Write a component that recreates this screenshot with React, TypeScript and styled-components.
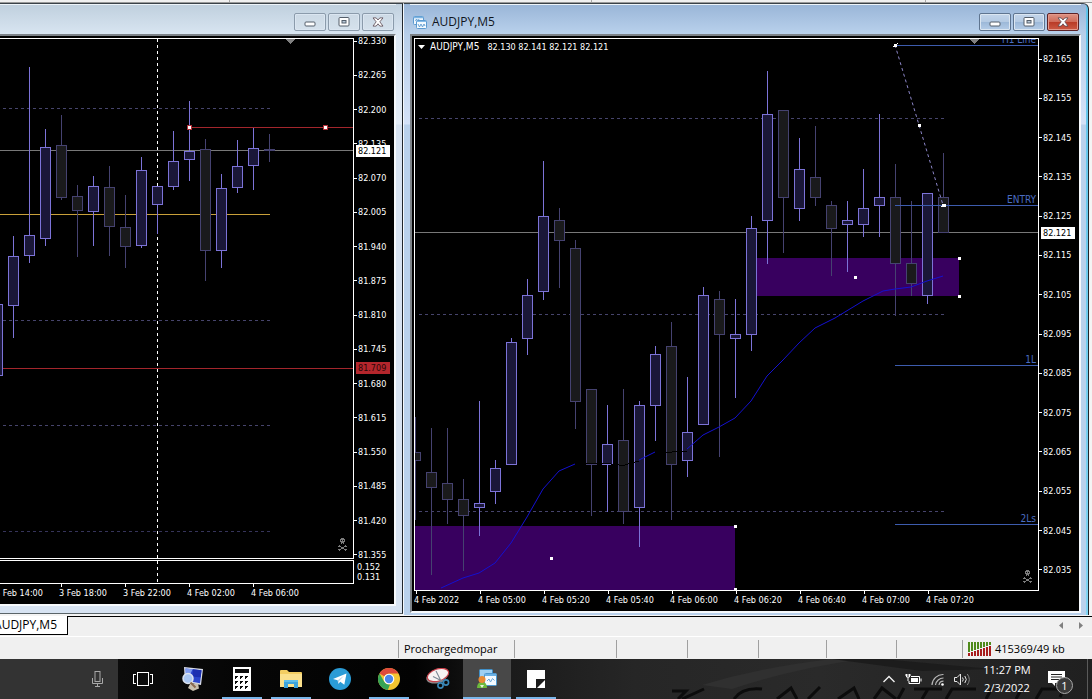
import React from "react";
import styled, { createGlobalStyle, css } from "styled-components";

const UI_FONT = '"Open Sans", "Noto Sans", sans-serif';
const CHART_FONT = '"DejaVu Sans Condensed", "DejaVu Sans", sans-serif';

const GlobalStyle = createGlobalStyle`
  *, *::before, *::after { box-sizing: border-box; }
  html, body { margin: 0; background: #f0f0f0; }
  button { font: inherit; color: inherit; border: 0; padding: 0; background: none; }
  svg { display: block; }
`;

/* ---------- page ---------- */

const Page = styled.div`
  display: flex;
  flex-direction: column;
  min-height: 100vh;
  overflow: hidden;
  font-family: ${UI_FONT};
  font-size: 12px;
  line-height: 16px;
  color: #000;
`;

const ToolbarEdge = styled.div`
  display: grid;
  grid-template-columns: 230fr 362fr 334fr 166fr;
  height: 3px;
  background: #f0f0f0;
  border-bottom: 1px solid #9a9a9a;
`;

const ToolbarCell = styled.div`
  border-right: 1px solid #a8a8a8;
  &:last-child { border-right: 0; }
`;

const Workspace = styled.main`
  flex: 1;
  display: grid;
  grid-template-columns: 403fr 689fr;
  background: #f4f4f4;
`;

/* ---------- chart windows ---------- */

const ChartWindow = styled.section<{ $active?: boolean }>`
  display: flex;
  flex-direction: column;
  min-width: 0;
  border-top: 1px solid #3a4248;
  border-right: 1px solid #20262c;
  ${(p) =>
    p.$active
      ? css`
          margin: 0 3px 1px 0;
          padding: 0 7px 2px 6px;
          border-left: 1px solid #f4f8fc;
          border-top-right-radius: 6px;
          background:
            linear-gradient(#5fc4ea, #7fd4f2) right / 2px 100% no-repeat,
            linear-gradient(#9ab6d8 0, #b8cfea 31px, #d4e2f8 120px, #b9d1ec 121px, #b9d1ec 100%);
        `
      : css`
          margin: 0 0 2px;
          padding: 0 6px 7px 0;
          border-bottom: 1px solid #5a6468;
          background: linear-gradient(#c0d0de 0, #dbe7f3 31px, #e4edf8 120px, #d7e3f2 121px);
        `}
`;

const TitleBar = styled.header<{ $active?: boolean }>`
  display: flex;
  align-items: center;
  gap: 2px;
  height: 30px;
  padding: 5px 2px 0 3px;
  border-top: 1px solid #eef4f9;
  background: ${(p) =>
    p.$active ? "linear-gradient(#9ab6d8, #b9d1ec)" : "linear-gradient(#c0d0de, #d8e5f1)"};
`;

const WindowTitle = styled.h1`
  flex: 1;
  display: flex;
  align-items: center;
  gap: 5px;
  margin: 0;
  font-size: 12px;
  line-height: 16px;
  font-weight: 400;
  color: #10151c;
`;

const WindowButton = styled.button<{ $tone?: "blue" | "red" }>`
  display: grid;
  place-items: center;
  width: 32px;
  height: 18px;
  border: 1px solid ${(p) => (p.$tone === "red" ? "#5c2226" : p.$tone ? "#5f7590" : "#8b9bab")};
  border-radius: 2px;
  box-shadow: inset 0 0 0 1px ${(p) => (p.$tone === "red" ? "#e39a8c" : "#dbe6f1")};
  background: ${(p) =>
    p.$tone === "red"
      ? "linear-gradient(#dd9384 0, #cf6a58 50%, #b93a26 51%, #cc5a44 100%)"
      : p.$tone
        ? "linear-gradient(#c3d5ea 0, #b4cae3 50%, #9cb8d8 51%, #b5cde8 100%)"
        : "linear-gradient(#ccd9e5, #d5e1ec)"};
`;

const ChartFrame = styled.div<{ $active?: boolean }>`
  flex: 1;
  display: flex;
  min-width: 0;
  background: #000;
  border-top: 2px solid #7c8288;
  border-left: ${(p) => (p.$active ? "2px solid #7c8288" : "0")};
  border-right: 2px solid #f6f9fc;
  border-bottom: 2px solid #f6f9fc;
  padding: ${(p) => (p.$active ? "0 0 0 2px" : "0")};
  font-family: ${CHART_FONT};
  font-size: 9px;
  line-height: 10px;
  color: #fff;
`;

const PlotColumn = styled.div`
  flex: 1;
  display: flex;
  flex-direction: column;
  min-width: 0;
  padding-top: 2px;
`;

const Plot = styled.div<{ $left?: boolean; $sub?: boolean }>`
  position: relative;
  display: flex;
  flex: ${(p) => (p.$sub ? "0 0 24px" : "1")};
  min-height: ${(p) => (p.$sub ? "24px" : "480px")};
  margin-top: ${(p) => (p.$sub ? "1px" : "0")};
  border: 1px solid #fff;
  border-left-width: ${(p) => (p.$left ? "1px" : "0")};
  overflow: hidden;
`;

const PlotSvg = styled.svg`
  flex: 1;
  min-width: 0;
  shape-rendering: crispEdges;
  text { font-size: 10px; fill: #4a6cc0; }
`;

const Quote = styled.p`
  position: absolute;
  top: 2px;
  left: 3px;
  display: flex;
  align-items: center;
  gap: 5px;
  margin: 0;
  line-height: 12px;
  white-space: nowrap;
`;

const QuoteSymbol = styled.span`
  font-size: 10px;
  padding-right: 3px;
`;

const TimeAxis = styled.div<{ $end?: boolean }>`
  display: flex;
  height: 20px;
  overflow: hidden;
  justify-content: ${(p) => (p.$end ? "flex-end" : "flex-start")};
  padding-right: ${(p) => (p.$end ? "39px" : "0")};
`;

const TimeLabel = styled.span`
  flex: 0 0 64px;
  white-space: nowrap;
  &::before {
    content: "";
    display: block;
    width: 1px;
    height: 3px;
    margin: 0 0 1px 2px;
    background: #fff;
  }
`;

const AxisColumn = styled.div<{ $padded?: boolean }>`
  position: relative;
  display: flex;
  flex-direction: column;
  flex: 0 0 40px;
  padding: ${(p) => (p.$padded ? "18px 0 36px" : "0")};
`;

const PriceScale = styled.div`
  flex: 1;
  display: flex;
  flex-direction: column;
  justify-content: space-between;
`;

const PriceLabel = styled.span`
  display: flex;
  align-items: center;
  gap: 1px;
  &::before {
    content: "";
    width: 3px;
    height: 1px;
    background: #fff;
  }
`;

const SubScale = styled.div`
  display: flex;
  flex-direction: column;
  height: 44px;
  padding: 2px 0 0 3px;
`;

const PriceTag = styled.span<{ $top: number; $red?: boolean }>`
  position: absolute;
  left: 2px;
  top: ${(p) => p.$top}px;
  width: 34px;
  height: 12px;
  padding-left: 2px;
  line-height: 12px;
  color: ${(p) => (p.$red ? "#2a0608" : "#000")};
  background: ${(p) => (p.$red ? "#b4262c" : "#fff")};
`;

/* ---------- tabs and status ---------- */

const TabStrip = styled.nav`
  display: flex;
  height: 21px;
  background: #f0f0f0;
  border-bottom: 1px solid #fff;
`;

const Tab = styled.button`
  display: flex;
  justify-content: flex-end;
  align-items: center;
  flex: 0 0 68px;
  height: 19px;
  padding-right: 10px;
  overflow: hidden;
  background: #fff;
  border-right: 1px solid #000;
  border-bottom: 1px solid #000;
`;

const TabRest = styled.div`
  flex: 1;
  display: flex;
  justify-content: flex-end;
  gap: 8px;
  padding-right: 5px;
  border-top: 1px solid #000;
`;

const ScrollButton = styled.button`
  display: grid;
  place-items: center;
  width: 12px;
  height: 17px;
`;

const StatusBar = styled.footer`
  display: grid;
  grid-template-columns: 398fr 116fr 102fr 71fr 71fr 68fr 70fr 66fr 130fr;
  height: 22px;
  padding: 3px 0 1px;
  font-size: 11px;
  background: #f0f0f0;
`;

const StatusCell = styled.div`
  display: flex;
  align-items: center;
  gap: 3px;
  padding-left: 5px;
  white-space: nowrap;
  border-left: 1px solid #a0a0a0;
  &:first-child { border-left: 0; }
`;

/* ---------- taskbar ---------- */

const Taskbar = styled.div`
  position: relative;
  display: flex;
  height: 40px;
  overflow: hidden;
  color: #fff;
  background: linear-gradient(90deg, #121212 0, #060606 22%, #020202 38%, #1a1a1a 46%, #262626 58%, #2a2a2a 75%, #202020 100%);
`;

const Wallpaper = styled.svg`
  position: absolute;
  top: 0;
  right: 0;
  width: 450px;
  height: 40px;
`;

const SearchArea = styled.div`
  display: flex;
  align-items: center;
  justify-content: flex-end;
  flex: 0 0 118px;
  padding-right: 14px;
  background: #333;
`;

const Apps = styled.div`
  display: flex;
  gap: 1px;
  flex: 1;
`;

const AppButton = styled.button<{ $wide?: boolean; $running?: boolean; $active?: boolean }>`
  position: relative;
  display: grid;
  place-items: center;
  flex: 0 0 ${(p) => (p.$wide ? 50 : 48)}px;
  height: 40px;
  background: ${(p) => (p.$active ? "#484848" : "transparent")};
  &::after {
    content: "";
    position: absolute;
    bottom: 0;
    left: ${(p) => (p.$active ? 0 : 4)}px;
    right: ${(p) => (p.$active ? 0 : 4)}px;
    height: 2px;
    background: ${(p) => (p.$running || p.$active ? "#7ab6ea" : "transparent")};
  }
`;

const Tray = styled.div`
  position: relative;
  display: flex;
  align-items: center;
  gap: 9px;
`;

const TrayButton = styled.button`
  display: grid;
  place-items: center;
`;

const Clock = styled.button`
  width: 54px;
  font-size: 11px;
  line-height: 18px;
  text-align: center;
  white-space: nowrap;
`;

const ActionCenter = styled.button`
  position: relative;
  display: flex;
  align-items: flex-start;
  width: 33px;
  height: 40px;
  padding: 12px 0 0 5px;
  margin-right: 2px;
`;

const Badge = styled.span`
  position: absolute;
  left: 13px;
  top: 18px;
  width: 17px;
  height: 17px;
  border: 1px solid #aaa;
  border-radius: 50%;
  background: #3a3a3a;
  font-size: 11px;
  line-height: 15px;
  text-align: center;
`;

const ShowDesktop = styled.button`
  width: 5px;
  height: 40px;
  border-left: 1px solid #5a5a5a;
`;

/* ---------- chart data: centre, high, body top, body bottom, low, rising ---------- */

type Candle = [number, number, number, number, number, boolean];

const hourly: Candle[] = [
  [-3, 304, 304, 375, 375, true],
  [13, 236, 256, 305, 337, true],
  [29, 67, 235, 255, 262, true],
  [45, 129, 147, 238, 245, true],
  [61, 115, 145, 197, 199, false],
  [77, 185, 196, 210, 256, false],
  [93, 176, 186, 211, 245, true],
  [109, 166, 187, 226, 255, false],
  [125, 195, 227, 246, 267, false],
  [141, 157, 170, 245, 247, true],
  [157, 186, 186, 204, 233, true],
  [173, 131, 161, 186, 189, true],
  [189, 101, 151, 159, 180, true],
  [205, 139, 149, 250, 280, false],
  [221, 174, 188, 250, 267, true],
  [237, 140, 166, 187, 192, true],
  [253, 128, 148, 165, 189, true],
  [269, 134, 149, 150, 161, false],
];

const fiveMinute: Candle[] = [
  [415, 417, 452, 460, 519, false],
  [431, 428, 472, 487, 574, false],
  [447, 428, 483, 499, 523, false],
  [463, 479, 499, 515, 570, false],
  [479, 401, 503, 507, 535, true],
  [495, 460, 468, 491, 503, true],
  [511, 338, 342, 464, 464, true],
  [527, 279, 295, 338, 354, true],
  [543, 161, 216, 291, 299, true],
  [559, 208, 220, 240, 287, false],
  [575, 240, 248, 401, 428, false],
  [591, 389, 389, 464, 515, false],
  [607, 405, 444, 464, 511, true],
  [623, 389, 440, 511, 523, false],
  [639, 401, 405, 507, 546, true],
  [655, 346, 354, 405, 440, true],
  [671, 322, 346, 464, 519, false],
  [687, 377, 432, 460, 476, true],
  [703, 287, 295, 424, 424, true],
  [719, 291, 299, 334, 456, false],
  [735, 299, 334, 338, 397, true],
  [751, 216, 228, 334, 350, true],
  [767, 71, 114, 220, 263, true],
  [783, 110, 110, 197, 252, false],
  [799, 138, 169, 208, 220, true],
  [815, 126, 177, 197, 205, false],
  [831, 201, 205, 228, 275, false],
  [847, 201, 220, 224, 271, true],
  [863, 169, 208, 224, 236, true],
  [879, 114, 197, 205, 236, true],
  [895, 164, 197, 263, 315, false],
  [911, 201, 263, 283, 295, false],
  [927, 193, 193, 295, 303, true],
  [943, 153, 197, 232, 232, false],
];

const hourlyPrices = Array.from({ length: 16 }, (_, i) => (82.33 - i * 0.065).toFixed(3));
const fiveMinutePrices = Array.from({ length: 14 }, (_, i) => (82.165 - i * 0.01).toFixed(3));
const hourlyTimes = ["3 Feb 14:00", "3 Feb 18:00", "3 Feb 22:00", "4 Feb 02:00", "4 Feb 06:00"];
const fiveMinuteTimes = [
  "4 Feb 2022", "4 Feb 05:00", "4 Feb 05:20", "4 Feb 05:40", "4 Feb 06:00",
  "4 Feb 06:20", "4 Feb 06:40", "4 Feb 07:00", "4 Feb 07:20",
];

const Candles = ({ data }: { data: Candle[] }) => (
  <>
    {data.map(([x, high, top, bottom, low, up]) => {
      const edge = up ? "#7c73d8" : "#454270";
      return (
        <g key={x} fill={edge}>
          <rect x={x} y={high} width={1} height={low - high + 1} />
          <rect x={x - 5} y={top} width={11} height={bottom - top + 1} />
          {bottom - top > 1 && (
            <rect x={x - 4} y={top + 1} width={9} height={bottom - top - 1} fill={up ? "#1a1738" : "#1a1a1c"} />
          )}
        </g>
      );
    })}
  </>
);

const HLine = ({ y, color, x = 0, end = "100%", dashed }: { y: number; color: string; x?: number; end?: number | string; dashed?: boolean }) => (
  <line x1={x} x2={end} y1={y + 0.5} y2={y + 0.5} stroke={color} strokeDasharray={dashed ? "3 3" : undefined} />
);

/* Skull and crossbones, one character per pixel. */
const skullRows = [
  "...###...",
  "..#####..",
  "..#.#.#..",
  "..#####..",
  "...###...",
  "...#.#...",
  ".........",
  ".#.....#.",
  "###...###",
  "...###...",
  "...###...",
  "###...###",
  ".#.....#.",
];

const Skull = () => (
  <path
    fill="#7c7c7c"
    d={skullRows
      .flatMap((row, y) => [...row].map((c, x) => (c === "#" ? `M${x} ${y}h1v1h-1z` : "")))
      .join("")}
  />
);

const HourlyPlot = () => (
  <PlotSvg role="img" aria-label="AUDJPY hourly candles">
    <HLine y={69} x={3} end={270} color="#46446c" dashed />
    <HLine y={281} x={3} end={270} color="#46446c" dashed />
    <HLine y={386} x={3} end={270} color="#46446c" dashed />
    <HLine y={492} x={3} end={270} color="#36345a" dashed />
    <HLine y={111} color="#787878" />
    <HLine y={175} end={270} color="#c9a03a" />
    <line x1={157.5} x2={157.5} y1={0} y2="100%" stroke="#fff" strokeDasharray="3 3" />
    <HLine y={329} color="#a3262c" />
    <HLine y={88} x={189} color="#a3262c" />
    <g transform="translate(0 -39)">
      <Candles data={hourly} />
      {[189, 325].map((x) => (
        <g key={x}>
          <rect x={x - 2} y={125} width={5} height={5} fill="#b03038" />
          <rect x={x - 1} y={126} width={3} height={3} fill="#fff" />
        </g>
      ))}
      <path d="M285 39h11l-5.500 5z" fill="#808080" />
      <g transform="translate(338 538)"><Skull /></g>
    </g>
  </PlotSvg>
);

const FiveMinutePlot = () => (
  <PlotSvg role="img" aria-label="AUDJPY five minute candles">
    <HLine y={79} x={4} end={529} color="#46446c" dashed />
    <HLine y={275} x={4} end={529} color="#46446c" dashed />
    <HLine y={472} x={4} end={529} color="#46446c" dashed />
    <HLine y={193} color="#787878" />
    <g transform="translate(-415 -39)">
      <rect x={415} y={526} width={320} height={64} fill="#38005f" />
      <rect x={751} y={258} width={208} height={38} fill="#38005f" />
      <Candles data={fiveMinute} />
      <g fill="none" stroke="#1410d0" shapeRendering="auto">
        <polyline points="441,588 463,578 479,573 495,563 511,543 527,517 543,489 559,471 575,464" />
        <polyline points="639,460 655,452" />
        <polyline points="687,449 703,435 719,427 735,418 751,401 767,376 783,360 799,343 815,328 835,318 863,301 883,291 895,289 911,287 927,281 943,276" />
      </g>
      <g fill="none" stroke="#000">
        <polyline points="584,463.5 607,463.5 623,465.500 639,461" />
        <polyline points="665,452.5 687,451" />
      </g>
      <g fill="none" stroke="#8c86c8" strokeDasharray="3 3" shapeRendering="auto">
        <line x1={895} y1={45} x2={943} y2={205} />
      </g>
      <path d="M969 39h11l-5.500 5z" fill="#808080" />
    </g>
    <HLine y={6} x={480} color="#3d5cae" />
    <HLine y={166} x={480} color="#3d5cae" />
    <HLine y={326} x={480} color="#3d5cae" />
    <HLine y={485} x={480} color="#3d5cae" />
    <text x="100%" y={4} dx={-2} textAnchor="end">H1 Line</text>
    <text x="100%" y={164} dx={-2} textAnchor="end">ENTRY</text>
    <text x="100%" y={324} dx={-2} textAnchor="end">1L</text>
    <text x="100%" y={483} dx={-2} textAnchor="end">2Ls</text>
    <g transform="translate(-415 -39)" fill="#fff">
      {[[895, 45], [919, 125], [943, 205], [551, 558], [735, 526], [735, 589], [855, 277], [959, 258], [959, 296]].map(([x, y]) => (
        <rect key={`${x}-${y}`} x={x - 1} y={y - 1} width={3} height={3} />
      ))}
      <path d="M893 46h1v1h-1zM897 43h1v1h-1zM941 206h1v1h-1zM945 204h1v3h-1z" />
      <g transform="translate(1023 570)"><Skull /></g>
    </g>
  </PlotSvg>
);

const WindowButtons = ({ active }: { active?: boolean }) => {
  const tone = active ? "blue" : undefined;
  return (
    <>
      <WindowButton $tone={tone} aria-label="Minimize">
        <svg width="12" height="14"><rect x="1" y="7" width="10" height="4" rx="1" fill="#fff" stroke="#555f6b" /></svg>
      </WindowButton>
      <WindowButton $tone={tone} aria-label="Restore">
        <svg width="12" height="10"><rect x="1" y=".5" width="10" height="8.500" rx="1" fill="#fff" stroke="#555f6b" /><rect x="4" y="3.500" width="4" height="2.500" fill="#b8c8d8" stroke="#555f6b" /></svg>
      </WindowButton>
      <WindowButton $tone={active ? "red" : undefined} aria-label="Close">
        <svg width="12" height="10" viewBox="0 0 13 11">
          <path d="M1 1h3.500l2 2.300L8.500 1H12L8.500 5.300 12 10H8.500l-2-2.500-2 2.500H1l3.500-4.700z" fill="#fff" stroke="#5c4a52" strokeWidth=".9" />
        </svg>
      </WindowButton>
    </>
  );
};

const ChartIcon = () => (
  <svg width="14" height="13" viewBox="0 0 14 13" fill="none">
    <rect x=".5" y=".5" width="10" height="8" rx="1" fill="#eef7ff" stroke="#5c9ad0" />
    <path d="M1 1.500h9" stroke="#7db4e2" strokeWidth="1.500" />
    <path d="M2.500 5l1-2 1.500 2 1-2" stroke="#5c9ad0" strokeWidth=".9" />
    <rect x="3.500" y="4.500" width="10" height="8" rx="1" fill="#f4faff" stroke="#5c9ad0" />
    <path d="M4 5.500h9" stroke="#85bbe8" strokeWidth="1" />
    <path d="M5 8l1.500 3L8 8l1.500 3L11 8l1 2" stroke="#5c9ad0" strokeWidth=".9" />
  </svg>
);

const SignalBars = () => (
  <svg width="24" height="14" shapeRendering="crispEdges">
    {Array.from({ length: 8 }, (_, i) => {
      const red = 3 + i;
      return (
        <g key={i}>
          <rect x={i * 3} y={0} width={2} height={13 - red} fill="#4f8a1c" />
          <rect x={i * 3} y={14 - red} width={2} height={red} fill="#a81c1c" />
        </g>
      );
    })}
  </svg>
);

const ComputerIcon = () => (
  <svg width="24" height="26" viewBox="0 0 24 26">
    <path d="M3 1l19 2-2 16-16-3z" fill="#d8dce8" />
    <path d="M4.500 2.500l16 1.700-1.500 13-13-2.500z" fill="#2b46cc" />
    <path d="M12 3.300l8.500.9-.8 7-8.200-.5z" fill="#1c2fb0" />
    <path d="M4.500 2.500l7 .8-3 7-4 1z" fill="#7f9cf0" />
    <circle cx="7" cy="12.500" r="5" fill="#a9c6f2" stroke="#dde4f0" strokeWidth="1.500" />
    <path d="M9 18l8-.5 1 5-6 2.500-5-3z" fill="#c8bfae" />
    <path d="M9.500 16.500l5 5" stroke="#8a6a50" strokeWidth="2" />
  </svg>
);

const CalculatorIcon = () => (
  <svg width="18" height="24" shapeRendering="crispEdges">
    <rect width="18" height="24" fill="#fff" />
    <rect x="2" y="2" width="14" height="4" fill="#0b0b0b" />
    {[9, 14, 19].map((y) => [2, 7, 12].map((x) => (
      <path key={`${x}-${y}`} d={`M${x} ${y}h3v1h-1v1h-1v1h-1z`} fill="#0b0b0b" />
    )))}
  </svg>
);

const FolderIcon = () => (
  <svg width="22" height="20" viewBox="0 0 22 20">
    <path d="M0 2q0-1 1-1h6l2 2h12q1 0 1 1v14H0z" fill="#f3cd62" />
    <path d="M0 5h22v13H0z" fill="#fbe08c" />
    <path d="M4 11h14v8h-4v-4H8v4H4z" fill="#3ea3dc" />
    <path d="M4 11h14v2H4z" fill="#5fbdea" />
  </svg>
);

const TelegramIcon = () => (
  <svg width="22" height="22" viewBox="0 0 22 22">
    <circle cx="11" cy="11" r="11" fill="#2a9bd6" />
    <path d="M4 11L17.500 5.500 15.300 16.800l-4-3-2 2-.6-3.600z" fill="#fff" />
    <path d="M8.700 12.200l6.500-4.700-5 5.500-.9 2.800z" fill="#b8d4e8" />
  </svg>
);

const ChromeIcon = () => (
  <svg width="22" height="22" viewBox="0 0 22 22">
    <circle cx="11" cy="11" r="11" fill="#f4c531" />
    <path d="M11 0a11 11 0 0 1 9.500 5.500H11a5.500 5.500 0 0 0-4.800 2.800L1.500 5.500A11 11 0 0 1 11 0z" fill="#de4a3c" />
    <path d="M1.500 5.500l4.700 8.200A5.500 5.500 0 0 0 12 16.400L9.800 22A11 11 0 0 1 1.500 5.500z" fill="#35a355" />
    <circle cx="11" cy="11" r="5.300" fill="#fff" />
    <circle cx="11" cy="11" r="4.200" fill="#4a86ea" />
  </svg>
);

const SnipIcon = () => (
  <svg width="24" height="22" viewBox="0 0 24 22" fill="none">
    <ellipse cx="11" cy="8.500" rx="11" ry="6.500" transform="rotate(-18 11 8.500)" fill="#8f8a8c" />
    <ellipse cx="12" cy="7" rx="11" ry="6" transform="rotate(-18 12 7)" fill="#f7f2f2" stroke="#c8404a" strokeWidth="1.200" />
    <path d="M10 3l5.500 11M7 8.500l10 5" stroke="#7d8894" strokeWidth="1.100" />
    <circle cx="14.500" cy="17.500" r="2.600" stroke="#3a88b8" strokeWidth="1.600" />
    <circle cx="20" cy="14.500" r="2.600" stroke="#3a88b8" strokeWidth="1.600" />
  </svg>
);

const TraderIcon = () => (
  <svg width="22" height="20" viewBox="0 0 22 20" fill="none">
    <rect x="3.500" y=".5" width="13" height="12" rx="1" fill="#9fd0f2" stroke="#3f8fc8" />
    <rect x="8.500" y="4.500" width="12" height="12" rx="1" fill="#f4faff" stroke="#4c98d0" />
    <path d="M9 6h11" stroke="#6bb2e6" strokeWidth="2" />
    <path d="M11 12l2-2 1.500 3 2-3.500 2 2" stroke="#6aa6d8" />
    <path d="M1 19q0-6 5-6t5 6z" fill="#6cba3c" />
    <circle cx="6" cy="10.500" r="3.500" fill="#e88a34" />
    <path d="M4 16l2 3 2-3z" fill="#e8f4dc" />
  </svg>
);

const apps = [
  { name: "Task View", wide: true, icon: <svg width="20" height="14" fill="none" stroke="#fff" shapeRendering="crispEdges"><path d="M4.500.5h11v13h-11zM3 2.500H.500v9H3M17 2.500h2.500v9H17" /></svg> },
  { name: "Remote Desktop", icon: <ComputerIcon /> },
  { name: "Calculator", running: true, icon: <CalculatorIcon /> },
  { name: "File Explorer", running: true, icon: <FolderIcon /> },
  { name: "Telegram", icon: <TelegramIcon /> },
  { name: "Chrome", running: true, icon: <ChromeIcon /> },
  { name: "Snipping Tool", icon: <SnipIcon /> },
  { name: "MetaTrader", active: true, icon: <TraderIcon /> },
  { name: "Sticky Notes", running: true, icon: <svg width="18" height="18"><path d="M0 0h18v18H0z" fill="#fff" /><path d="M9 9h9v1l-8 8H9z" fill="#1a1a1a" /></svg> },
];

export default function App() {
  return (
    <Page>
      <GlobalStyle />
      <ToolbarEdge>
        <ToolbarCell /><ToolbarCell /><ToolbarCell /><ToolbarCell />
      </ToolbarEdge>

      <Workspace>
        <ChartWindow>
          <TitleBar>
            <WindowTitle />
            <WindowButtons />
          </TitleBar>
          <ChartFrame>
            <PlotColumn>
              <Plot><HourlyPlot /></Plot>
              <Plot $sub>
                <PlotSvg aria-hidden="true">
                  <line x1={157.5} x2={157.5} y1={0} y2="100%" stroke="#fff" strokeDasharray="3 3" />
                </PlotSvg>
              </Plot>
              <TimeAxis $end>
                {hourlyTimes.map((t) => <TimeLabel key={t}>{t}</TimeLabel>)}
              </TimeAxis>
            </PlotColumn>
            <AxisColumn>
              <PriceScale>
                {hourlyPrices.map((p) => <PriceLabel key={p}>{p}</PriceLabel>)}
              </PriceScale>
              <SubScale>
                <span>0.152</span>
                <span>0.131</span>
              </SubScale>
              <PriceTag $top={109}>82.121</PriceTag>
              <PriceTag $top={326} $red>81.709</PriceTag>
            </AxisColumn>
          </ChartFrame>
        </ChartWindow>

        <ChartWindow $active>
          <TitleBar $active>
            <WindowTitle><ChartIcon />AUDJPY,M5</WindowTitle>
            <WindowButtons active />
          </TitleBar>
          <ChartFrame $active>
            <PlotColumn>
              <Plot $left>
                <FiveMinutePlot />
                <Quote>
                  <svg width="7" height="4"><path d="M0 0h7L3.500 4z" fill="#fff" /></svg>
                  <QuoteSymbol>AUDJPY,M5</QuoteSymbol>
                  <span>82.130 82.141 82.121 82.121</span>
                </Quote>
              </Plot>
              <TimeAxis>
                {fiveMinuteTimes.map((t) => <TimeLabel key={t}>{t}</TimeLabel>)}
              </TimeAxis>
            </PlotColumn>
            <AxisColumn $padded>
              <PriceScale>
                {fiveMinutePrices.map((p) => <PriceLabel key={p}>{p}</PriceLabel>)}
              </PriceScale>
              <PriceTag $top={191}>82.121</PriceTag>
            </AxisColumn>
          </ChartFrame>
        </ChartWindow>
      </Workspace>

      <TabStrip>
        <Tab>AUDJPY,M5</Tab>
        <TabRest>
          <ScrollButton aria-label="Scroll tabs left"><svg width="4" height="7"><path d="M4 0v7L0 3.500z" fill="#808080" /></svg></ScrollButton>
          <ScrollButton aria-label="Scroll tabs right"><svg width="4" height="7"><path d="M0 0v7l4-3.500z" fill="#808080" /></svg></ScrollButton>
        </TabRest>
      </TabStrip>

      <StatusBar>
        <StatusCell />
        <StatusCell>Prochargedmopar</StatusCell>
        <StatusCell /><StatusCell /><StatusCell /><StatusCell /><StatusCell /><StatusCell />
        <StatusCell><SignalBars />415369/49 kb</StatusCell>
      </StatusBar>

      <Taskbar>
        <Wallpaper aria-hidden="true" viewBox="0 0 450 40">
          <path d="M60 26Q120 8 190 0h30Q150 10 90 30z" fill="#303030" />
          <path d="M190 0l90 12 70-2-110-10z" fill="#1c1c1c" />
          <g fill="none" stroke="#0c0c0c" strokeWidth="3">
            <path d="M30 32h14l-8 8M62 30l-22 10" />
            <path d="M92 40q8-12 28-10M135 40l14-11 6 11M178 28l-12 12M196 40l16-11 5 11M232 40l8-11 14 11M262 29l-6 11M272 30h28M286 30l-6 10M334 30h-24l-6 10M350 29l-6 11M380 29l-6 11M394 40l6-10h16q6 2 2 8" />
          </g>
        </Wallpaper>
        <SearchArea>
          <TrayButton aria-label="Voice search">
            <svg width="13" height="18" fill="none" stroke="#a8a8a8"><rect x="4" y="1.500" width="5" height="10" /><path d="M1.500 8v5.500h10V8M6.500 13.500v3M4 16.500h5" /></svg>
          </TrayButton>
        </SearchArea>
        <Apps>
          {apps.map((a) => (
            <AppButton key={a.name} aria-label={a.name} $wide={a.wide} $running={a.running} $active={a.active}>
              {a.icon}
            </AppButton>
          ))}
        </Apps>
        <Tray>
          <TrayButton aria-label="Show hidden icons">
            <svg width="14" height="10" fill="none" stroke="#f0f0f0" strokeWidth="1.400"><path d="M1.500 8L7 2.500 12.500 8" /></svg>
          </TrayButton>
          <TrayButton aria-label="Battery">
            <svg width="17" height="13" fill="none" stroke="#fff"><path d="M1.500 1v3h3V1M3 4v4M6 3.500h8.500v7H4V8" /><path d="M6 5h7v4H6z" fill="#fff" stroke="none" /><path d="M16 5.500v3M0 2h6" /></svg>
          </TrayButton>
          <TrayButton aria-label="Wi-Fi">
            <svg width="14" height="13" fill="none" stroke="#b8b8b8" strokeWidth="1.200"><path d="M1 12A11 11 0 0 1 12.500 1.500M4.500 12a8 8 0 0 1 8-7M8 12a4.500 4.500 0 0 1 4.500-3.800" /><circle cx="11.500" cy="11.500" r="1.300" fill="#fff" stroke="none" /></svg>
          </TrayButton>
          <TrayButton aria-label="Volume">
            <svg width="17" height="13" fill="none" stroke="#e8e8e8"><path d="M.500 4.500h2.500l3.500-3.500v11L3 8.500H.500z" /><path d="M8.500 4.500q1.500 2 0 4M10.800 3q3 3.500 0 7" /><path d="M13.300 1q4 5.500 0 11" stroke="#888" /></svg>
          </TrayButton>
          <Clock>11:27 PM<br />2/3/2022</Clock>
          <ActionCenter aria-label="Notifications, 1 new">
            <svg width="17" height="15"><path d="M0 0h17v12H7v3l-3-3H0z" fill="#fff" /><path d="M3 3.500h11M3 6h11M3 8.500h8" stroke="#222" /></svg>
            <Badge>1</Badge>
          </ActionCenter>
          <ShowDesktop aria-label="Show desktop" />
        </Tray>
      </Taskbar>
    </Page>
  );
}
